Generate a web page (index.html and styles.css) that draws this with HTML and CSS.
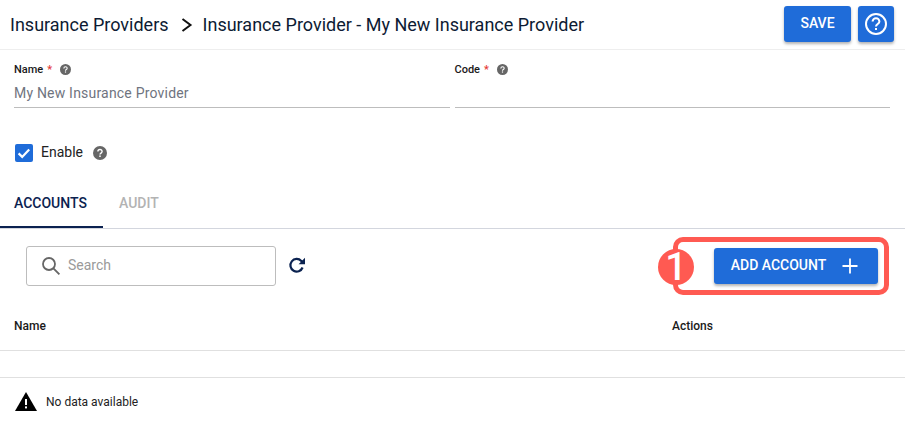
FILE: index.html
```html
<!DOCTYPE html>
<html lang="en">
<head>
<meta charset="utf-8">
<title>Insurance Provider</title>
<link rel="stylesheet" href="styles.css">
</head>
<body>
<div class="page">
  <header class="topbar">
    <div class="crumbs">
      <span>Insurance Providers</span>
      <svg class="chev" viewBox="0 0 12 14" width="12" height="14"><path d="M1.5 1l8 6-8 6" fill="none" stroke="#111" stroke-width="2"/></svg>
      <span>Insurance Provider - My New Insurance Provider</span>
    </div>
    <div class="top-actions">
      <button class="btn save">SAVE</button>
      <button class="btn help" aria-label="Help">
        <svg viewBox="0 0 24 24" width="24" height="24"><circle cx="12" cy="12" r="10" fill="none" stroke="#fff" stroke-width="2"/><path d="M8.6 9.6a3.4 3.4 0 0 1 6.8 0c0 2.4-3.4 2.5-3.4 4.9" fill="none" stroke="#fff" stroke-width="2"/><rect x="11" y="16" width="2" height="2" fill="#fff"/></svg>
      </button>
    </div>
  </header>

  <section class="fields">
    <div class="field">
      <div class="label">Name <i>*</i>
        <svg class="q small" viewBox="0 0 24 24"><use href="#qm"/></svg>
      </div>
      <div class="value">My New Insurance Provider</div>
    </div>
    <div class="field">
      <div class="label">Code <i>*</i>
        <svg class="q small" viewBox="0 0 24 24"><use href="#qm"/></svg>
      </div>
      <div class="value"></div>
    </div>
  </section>

  <div class="enable">
    <span class="check"><svg viewBox="0 0 18 18" width="18" height="18"><path d="M3.6 9.4l3.6 3.5 7-7.4" fill="none" stroke="#fff" stroke-width="2.2"/></svg></span>
    <span class="enable-text">Enable</span>
    <svg class="q big" viewBox="0 0 24 24"><use href="#qm"/></svg>
  </div>

  <nav class="tabs">
    <span class="tab active">ACCOUNTS</span>
    <span class="tab">AUDIT</span>
  </nav>

  <div class="toolbar">
    <div class="search">
      <svg viewBox="0 0 20 20" width="20" height="20"><circle cx="8" cy="8" r="6" fill="none" stroke="#666" stroke-width="1.8"/><path d="M12.4 12.4l6 6" stroke="#666" stroke-width="1.8"/></svg>
      <span class="search-text">Search</span>
    </div>
    <svg class="refresh" viewBox="0 0 18 18" width="18" height="18"><path d="M14.6 11.5a6.3 6.3 0 1 1-1.3-6.6L15.5 7" fill="none" stroke="#0b2250" stroke-width="2.2"/><path d="M17 1.8v6.4h-6.4z" fill="#0b2250"/></svg>
    <button class="btn add"><span class="add-text">ADD ACCOUNT</span>
      <svg viewBox="0 0 16 16" width="16" height="16"><path d="M8 .5v15M.5 8h15" stroke="#fff" stroke-width="1.8"/></svg>
    </button>
    <div class="callout"><span class="badge">1</span></div>
  </div>

  <div class="thead">
    <span class="col-name">Name</span>
    <span>Actions</span>
  </div>
  <div class="empty-row"></div>
  <div class="nodata">
    <svg viewBox="0 0 22 19" width="22" height="19"><path d="M11 0l11 19H0z" fill="#000"/><rect x="10" y="7" width="2" height="6" fill="#fff"/><rect x="10" y="14.4" width="2" height="2" fill="#fff"/></svg>
    <span>No data available</span>
  </div>
</div>

<svg class="defs" width="0" height="0"><defs>
  <g id="qm"><circle cx="12" cy="12" r="12" fill="#666"/><path d="M8.4 9.6a3.6 3.6 0 0 1 7.2 0c0 2.5-3.6 2.6-3.6 5" fill="none" stroke="#fff" stroke-width="2.4"/><rect x="10.7" y="16.2" width="2.6" height="2.6" fill="#fff"/></g>
</defs></svg>
</body>
</html>
```
FILE: styles.css
```css
* { box-sizing: border-box; }
html, body { margin: 0; padding: 0; background: #fff; }
body { font-family: Roboto, "Liberation Sans", sans-serif; color: #111; overflow: hidden; }
.page { width: 905px; height: 424px; }
.defs { display: block; height: 0; }

.topbar { height: 50px; border-bottom: 1px solid #eee; display: flex; align-items: flex-start; justify-content: space-between; padding: 6px 11px 0 10px; }
.crumbs { display: flex; align-items: center; height: 36px; font-size: 18px; color: #0d1b33; }
.chev { margin: 1px 10px 0 12px; }
.top-actions { display: flex; gap: 7px; }
.btn { border: 0; background: #1f6cd9; color: #fff; border-radius: 3px; font-family: inherit; font-weight: 500; box-shadow: 0 2px 3px rgba(0,0,0,.3); padding: 0; }
.save { width: 67px; height: 36px; font-size: 14px; padding-bottom: 2px; }
.help { width: 36px; height: 36px; display: flex; align-items: center; justify-content: center; }

.fields { display: flex; gap: 5px; padding: 0 15px 0 14px; }
.field { flex: 1; }
.label { display: flex; align-items: center; height: 14px; margin-top: 12px; font-size: 11px; font-weight: 500; color: #1a1a1a; }
.label i { font-style: normal; color: #e53935; margin-left: 4px; }
.q.small { width: 11px; height: 11px; margin-left: 8px; }
.q.big { width: 14px; height: 14px; margin-left: 10px; }
.value { height: 29px; margin-top: 3px; padding-top: 4px; border-bottom: 1px solid #bdbdbd; font-size: 14px; line-height: 20px; letter-spacing: .2px; color: #6f7480; }

.enable { display: flex; align-items: center; height: 18px; margin-top: 36px; padding-left: 15px; }
.check { width: 18px; height: 18px; background: #1f6cd9; border-radius: 2px; }
.enable-text { margin-left: 8px; padding-bottom: 2px; font-size: 14px; color: #222; }

.tabs { display: flex; align-items: flex-start; height: 49px; margin-top: 18px; border-bottom: 1px solid #d3d6de; }
.tab { padding: 0 16px; line-height: 47px; font-size: 14px; font-weight: 500; color: #b3b3b3; }
.tab.active { width: 103px; height: 48px; padding-left: 14px; color: #0b2250; border-bottom: 2px solid #0b2250; }

.toolbar { position: relative; display: flex; align-items: center; height: 74px; padding-left: 26px; padding-right: 27px; }
.search { width: 250px; height: 40px; border: 1px solid #bdbdbd; border-radius: 3px; display: flex; align-items: center; gap: 7px; padding-left: 14px; padding-bottom: 1px; font-size: 14px; color: #9a9a9a; }
.search-text { padding-bottom: 2px; }
.refresh { margin-left: 12px; margin-bottom: 2px; }
.add { margin-left: auto; width: 164px; height: 36px; font-size: 14px; display: flex; align-items: center; justify-content: center; gap: 16px; padding-right: 3px; position: relative; z-index: 1; }
.add-text { padding-bottom: 2px; }
.callout { position: absolute; left: 673px; top: 8px; width: 216px; height: 58px; border: 5px solid #ff5a52; border-radius: 10px; }
.badge { position: absolute; left: -20px; top: 7px; width: 36px; height: 36px; border-radius: 50%; background: #ff5a52; color: #fff; font-size: 38px; font-weight: 500; line-height: 36px; text-align: center; }

.thead { display: flex; align-items: center; height: 48px; padding-left: 14px; padding-bottom: 1px; border-bottom: 1px solid #e0e0e0; font-size: 12px; font-weight: 500; color: #1a1a1a; }
.col-name { width: 658px; }
.empty-row { height: 27px; border-bottom: 1px solid #e0e0e0; }
.nodata { display: flex; align-items: center; gap: 9px; height: 47px; padding-left: 15px; font-size: 12px; color: #222; }
```
